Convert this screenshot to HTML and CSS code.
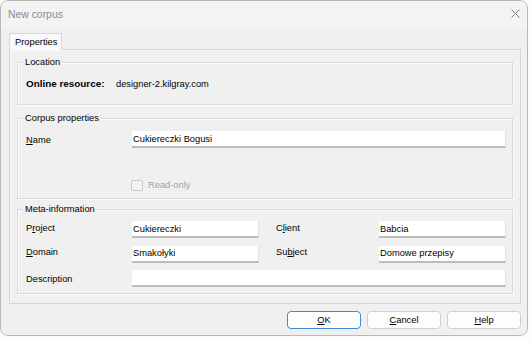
FILE: index.html
```html
<!DOCTYPE html>
<html>
<head>
<meta charset="utf-8">
<link rel="stylesheet" href="styles.css">
</head>
<body>
<div class="window">
  <div class="titlebar">
    <span class="title">New corpus</span>
    <svg class="close" width="9" height="9" viewBox="0 0 9 9"><path d="M0.5 0.5 L8.5 8.5 M8.5 0.5 L0.5 8.5" stroke="#7d7d7d" stroke-width="1" fill="none"/></svg>
  </div>
  <div class="content">
    <div class="tabs"><div class="tab">Properties</div></div>
    <div class="panel">
      <div class="group g-location">
        <span class="group-title">Location</span>
        <div class="loc-row">
          <span class="loc-label">Online resource:</span>
          <span class="loc-value">designer-2.kilgray.com</span>
        </div>
      </div>
      <div class="group g-corpus">
        <span class="group-title">Corpus properties</span>
        <div class="form-row">
          <label class="lbl lbl-name"><u>N</u>ame</label>
          <input class="field wide" type="text" value="Cukiereczki Bogusi">
        </div>
        <div class="check-row">
          <span class="checkbox"></span>
          <span class="check-label">Read-only</span>
        </div>
      </div>
      <div class="group g-meta">
        <span class="group-title">Meta-information</span>
        <div class="meta-grid">
          <label class="lbl up">P<u>r</u>oject</label>
          <input class="field" type="text" value="Cukiereczki">
          <span></span>
          <label class="lbl up">C<u>l</u>ient</label>
          <input class="field" type="text" value="Babcia">

          <label class="lbl up"><u>D</u>omain</label>
          <input class="field" type="text" value="Smakołyki">
          <span></span>
          <label class="lbl up">Su<u>b</u>ject</label>
          <input class="field" type="text" value="Domowe przepisy">

          <label class="lbl">Description</label>
          <input class="field span4" type="text" value="">
        </div>
      </div>
    </div>
    <div class="buttons">
      <button class="btn default"><u>O</u>K</button>
      <button class="btn"><u>C</u>ancel</button>
      <button class="btn"><u>H</u>elp</button>
    </div>
  </div>
</div>
</body>
</html>
```

FILE: styles.css
```css
* { box-sizing: border-box; }
html, body { margin: 0; padding: 0; }
body {
  background: #fbfbfb;
  width: 531px;
  height: 340px;
  font-family: "Liberation Sans", Arial, sans-serif;
  font-size: 9.3px;
  color: #000;
}
.window {
  width: 528px;
  height: 336px;
  border: 1px solid #b8b8b8;
  border-radius: 8px;
  background: #f0f0f0;
  overflow: hidden;
  display: flex;
  flex-direction: column;
}
.titlebar {
  height: 26px;
  flex: none;
  background: #f3f3f3;
  display: flex;
  align-items: center;
  justify-content: space-between;
  padding: 0 7px 0 7px;
}
.title {
  font-size: 10.4px;
  color: #8b8b8b;
  margin-top: 1px;
}
.close { margin-top: -1px; }
.content {
  flex: 1;
  padding: 6px 6px 0 8px;
  display: flex;
  flex-direction: column;
}
.tabs { display: flex; position: relative; z-index: 1; }
.tab {
  height: 17px;
  width: 53px;
  border: 1px solid #d6d6d6;
  border-bottom: none;
  background: #f9f9f9;
  padding: 3px 0 0 5px;
  margin-bottom: -1px;
}
.panel {
  width: 512px;
  height: 255px;
  border: 1px solid #d6d6d6;
  box-shadow: inset 1px 1px 0 #fafafa;
  padding: 12px 7px 0 7px;
  display: flex;
  flex-direction: column;
}
.group {
  position: relative;
  border: 1px solid #d9d9d9;
  box-shadow: inset 1px 1px 0 #fafafa, 1px 1px 0 #fafafa;
  padding: 0 6px 0 8px;
}
.group-title {
  position: absolute;
  top: -7px;
  left: 5px;
  padding: 0 2px;
  background: #f0f0f0;
  line-height: 12px;
}
.g-location { height: 43px; }
.g-corpus { height: 81px; margin-top: 13px; }
.g-meta { height: 85px; margin-top: 10px; }
.loc-row {
  display: flex;
  margin-top: 15px;
  line-height: 12px;
}
.loc-label { font-weight: bold; font-size: 9.9px; width: 90px; }
.loc-value { }
.form-row {
  display: flex;
  align-items: center;
  margin-top: 12px;
}
.lbl { width: 106px; flex: none; line-height: 12px; }
.field {
  height: 17px;
  border: none;
  border-right: 1px solid #e2e2e2;
  border-bottom: 2px solid #bdbdbd;
  background: #fff;
  font-family: "Liberation Sans", Arial, sans-serif;
  font-size: 9.3px;
  color: #000;
  padding: 0 0 0 1px;
  margin: 0;
  outline: none;
  width: 127px;
}
.wide { width: 374px; }
.check-row {
  display: flex;
  align-items: center;
  margin-top: 31px;
  margin-left: 105px;
}
.checkbox {
  width: 12px;
  height: 11px;
  border: 1px solid #c9c9c9;
  border-radius: 2px;
  background: #f4f4f4;
}
.check-label { color: #a2a2a2; margin-left: 5px; line-height: 12px; }
.meta-grid {
  display: grid;
  grid-template-columns: 106px 127px 17px 103px 127px;
  row-gap: 7.5px;
  align-items: center;
  margin-top: 11px;
}
.meta-grid .lbl { width: auto; }
.up { position: relative; top: -2px; }
.span4 { grid-column: 2 / 6; width: 374px; }
.buttons {
  display: flex;
  justify-content: flex-end;
  gap: 6px;
  margin-top: 7px;
}
.btn {
  width: 74px;
  height: 18px;
  border: 1px solid #d0d0d0;
  border-radius: 4px;
  background: #fdfdfd;
  font-family: "Liberation Sans", Arial, sans-serif;
  font-size: 9.3px;
  color: #000;
  padding: 0;
  margin: 0;
}
.btn.default { border-color: #3c8ad8; }
```
